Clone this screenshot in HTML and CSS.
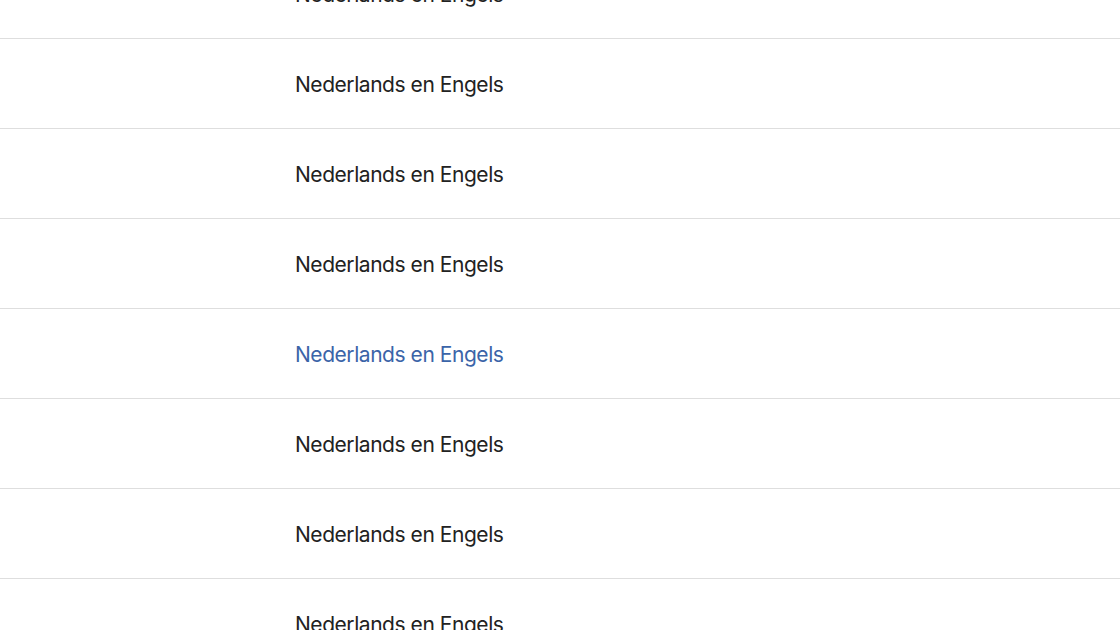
FILE: index.html
```html
<!DOCTYPE html>
<html>
<head>
  <title>Talen</title>
  <link rel="stylesheet" href="styles.css">
</head>
<body>
  <ul class="language-list">
    <li class="language-item">Nederlands en Engels</li>
    <li class="language-item">Nederlands en Engels</li>
    <li class="language-item">Nederlands en Engels</li>
    <li class="language-item">Nederlands en Engels</li>
    <li class="language-item active">Nederlands en Engels</li>
    <li class="language-item">Nederlands en Engels</li>
    <li class="language-item">Nederlands en Engels</li>
    <li class="language-item">Nederlands en Engels</li>
  </ul>
</body>
</html>
```

FILE: styles.css
```css
body {
  margin: 0;
  background-color: #fff;
  font-family: Inter, "Noto Sans", sans-serif;
  overflow: hidden;
}

.language-list {
  list-style: none;
  margin: -51px 0 0 0;
  padding: 0;
}

.language-item {
  height: 88px;
  padding: 1px 0 0 295px;
  display: flex;
  align-items: center;
  border-bottom: 1px solid #dedede;
  font-size: 21px;
  letter-spacing: -0.45px;
  color: #222;
}

.language-item.active {
  color: #3b64a8;
}
```
